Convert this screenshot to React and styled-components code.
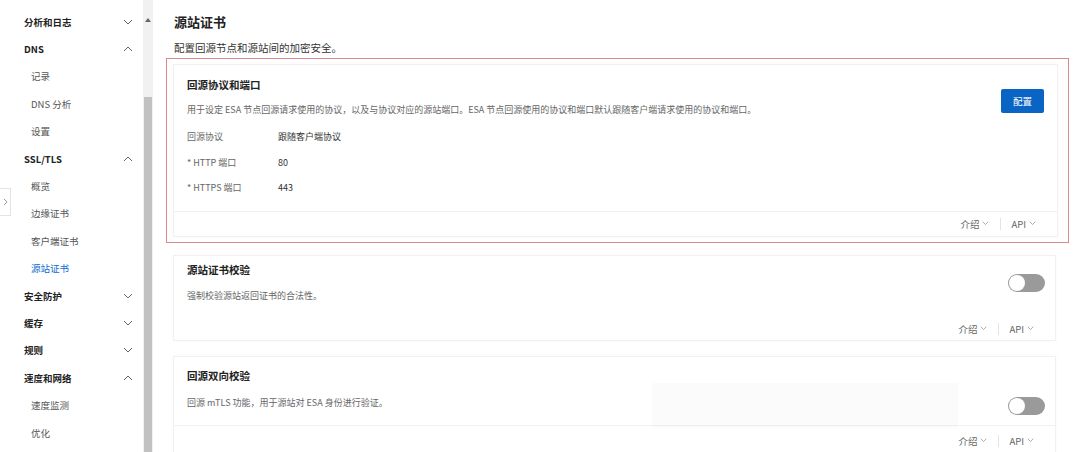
import React from "react";
import styled, { createGlobalStyle } from "styled-components";

const Global = createGlobalStyle`
  html, body {
    margin: 0;
    padding: 0;
    background: #fff;
    font-family: "Noto Sans CJK SC", "Noto Sans", "Liberation Sans", sans-serif;
    color: #333;
  }
`;

const Page = styled.div`
  position: relative;
  width: 1080px;
  height: 452px;
  overflow: hidden;
  display: flex;
`;

const Sidebar = styled.nav`
  width: 143px;
  padding-top: 8px;
  box-sizing: border-box;
  display: flex;
  flex-direction: column;
`;

const NavRow = styled.div`
  height: 27.4px;
  display: flex;
  align-items: center;
  justify-content: space-between;
  padding: 0 10px 0 ${(p) => (p.$group ? 24 : 31)}px;
  font-size: 9.5px;
  font-weight: ${(p) => (p.$group ? 700 : 400)};
  color: ${(p) => (p.$active ? "#0a6ccf" : p.$group ? "#222" : "#555")};
`;

const Scrollbar = styled.div`
  width: 10px;
  background: #f1f1f1;
  display: flex;
  flex-direction: column;
  align-items: center;
`;

const ScrollArrow = styled.div`
  margin-top: 18px;
  width: 0;
  height: 0;
  border-left: 3px solid transparent;
  border-right: 3px solid transparent;
  border-bottom: 4px solid #666;
`;

const ScrollThumb = styled.div`
  margin-top: 75px;
  width: 8px;
  flex: 1;
  background: #c1c1c1;
`;

const Handle = styled.div`
  position: absolute;
  left: 0;
  top: 188px;
  width: 10px;
  height: 26px;
  background: #fff;
  border: 1px solid #e3e3e3;
  border-left: none;
  display: flex;
  align-items: center;
  justify-content: center;
`;

const Main = styled.main`
  flex: 1;
  padding: 12px 11px 0 13px;
  display: flex;
  flex-direction: column;
`;

const Title = styled.h1`
  margin: 0;
  padding-left: 8px;
  font-size: 13px;
  line-height: 20px;
  font-weight: 700;
  color: #222;
`;

const Subtitle = styled.p`
  margin: 6px 0 0;
  padding-left: 8px;
  font-size: 10.5px;
  line-height: 20px;
  color: #333;
`;

const Highlight = styled.div`
  border: 1.5px solid #d98890;
  padding: 5px 10px 5px 6px;
`;

const Card = styled.section`
  background: #fff;
  border: 1px solid #f1f1f1;
  box-shadow: 0 0 3px rgba(0, 0, 0, 0.03);
  padding-top: ${(p) => p.$top}px;
  margin: ${(p) => (p.$outer ? `${p.$gap}px 13px 0 7px` : "0")};
  display: flex;
  flex-direction: column;
`;

const CardHead = styled.div`
  display: flex;
  justify-content: space-between;
  align-items: flex-start;
  padding: 0 ${(p) => p.$right}px 0 13px;
`;

const CardTitle = styled.h2`
  margin: 0;
  font-size: 10.5px;
  line-height: 18px;
  font-weight: 700;
  color: #222;
`;

const CardDesc = styled.p`
  margin: ${(p) => p.$gap}px 0 0;
  font-size: 9px;
  line-height: 16px;
  color: #666;
`;

const Button = styled.button`
  margin-top: ${(p) => p.$offset}px;
  width: 43px;
  height: 24px;
  border: none;
  border-radius: 2px;
  background: #0a64c4;
  color: #fff;
  font-family: inherit;
  font-size: 9.5px;
  padding: 0;
`;

const Toggle = styled.div`
  margin-top: ${(p) => p.$offset}px;
  width: 37px;
  height: 18px;
  border-radius: 9px;
  background: #9a9a9a;
  position: relative;
  box-sizing: border-box;
  &::after {
    content: "";
    position: absolute;
    left: 1px;
    top: 1px;
    width: 16px;
    height: 16px;
    border-radius: 50%;
    background: #fff;
  }
`;

const Fields = styled.div`
  margin-top: 6px;
  padding-left: 13px;
  display: flex;
  flex-direction: column;
`;

const Field = styled.div`
  height: 25.5px;
  display: flex;
  align-items: center;
  font-size: 9px;
`;

const FieldLabel = styled.span`
  width: 91px;
  color: #666;
`;

const FieldValue = styled.span`
  color: #333;
`;

const Footer = styled.div`
  margin-top: ${(p) => p.$gap}px;
  height: ${(p) => p.$h}px;
  border-top: 1px solid ${(p) => (p.$line ? "#f1f1f1" : "transparent")};
  display: flex;
  align-items: center;
  justify-content: flex-end;
  padding-right: 21px;
  font-size: 9.5px;
  color: #666;
`;

const FooterLink = styled.span`
  display: flex;
  align-items: center;
  gap: 3px;
`;

const Divider = styled.span`
  width: 1px;
  height: 12px;
  background: #e4e4e4;
  margin: 0 10px 0 11px;
`;

const Ghost = styled.div`
  position: absolute;
  left: 652px;
  top: 383px;
  width: 306px;
  height: 45px;
  background: rgba(0, 0, 0, 0.014);
`;

const Chevron = ({ up, size = 10, color = "#666" }) => (
  <svg width={size} height={size * 0.6} viewBox="0 0 10 6" fill="none">
    <polyline
      points={up ? "1,5 5,1 9,5" : "1,1 5,5 9,1"}
      stroke={color}
      strokeWidth="1"
    />
  </svg>
);

const nav = [
  { label: "分析和日志", group: true, up: false },
  { label: "DNS", group: true, up: true },
  { label: "记录" },
  { label: "DNS 分析" },
  { label: "设置" },
  { label: "SSL/TLS", group: true, up: true },
  { label: "概览" },
  { label: "边缘证书" },
  { label: "客户端证书" },
  { label: "源站证书", active: true },
  { label: "安全防护", group: true, up: false },
  { label: "缓存", group: true, up: false },
  { label: "规则", group: true, up: false },
  { label: "速度和网络", group: true, up: true },
  { label: "速度监测" },
  { label: "优化" },
];

const CardFooter = ({ gap, h, line = true }) => (
  <Footer $gap={gap} $h={h} $line={line}>
    <FooterLink>
      介绍 <Chevron size={7} color="#888" />
    </FooterLink>
    <Divider />
    <FooterLink>
      API <Chevron size={7} color="#888" />
    </FooterLink>
  </Footer>
);

export default function App() {
  return (
    <Page>
      <Global />
      <Sidebar>
        {nav.map((n) => (
          <NavRow key={n.label} $group={n.group} $active={n.active}>
            <span>{n.label}</span>
            {n.group && <Chevron up={n.up} />}
          </NavRow>
        ))}
      </Sidebar>
      <Scrollbar>
        <ScrollArrow />
        <ScrollThumb />
      </Scrollbar>
      <Handle>
        <svg width="5" height="8" viewBox="0 0 5 8" fill="none">
          <polyline points="1,1 4,4 1,7" stroke="#999" strokeWidth="1" />
        </svg>
      </Handle>
      <Main>
        <Title>源站证书</Title>
        <Subtitle>配置回源节点和源站间的加密安全。</Subtitle>
        <Highlight>
          <Card $top={11}>
            <CardHead $right={13}>
              <div>
                <CardTitle>回源协议和端口</CardTitle>
                <CardDesc $gap={8}>
                  用于设定 ESA 节点回源请求使用的协议，以及与协议对应的源站端口。ESA 节点回源使用的协议和端口默认跟随客户端请求使用的协议和端口。
                </CardDesc>
              </div>
              <Button $offset={13}>配置</Button>
            </CardHead>
            <Fields>
              <Field>
                <FieldLabel>回源协议</FieldLabel>
                <FieldValue>跟随客户端协议</FieldValue>
              </Field>
              <Field>
                <FieldLabel>* HTTP 端口</FieldLabel>
                <FieldValue>80</FieldValue>
              </Field>
              <Field>
                <FieldLabel>* HTTPS 端口</FieldLabel>
                <FieldValue>443</FieldValue>
              </Field>
            </Fields>
            <CardFooter gap={10} h={24} />
          </Card>
        </Highlight>
        <Card $outer $gap={12} $top={5}>
          <CardHead $right={10}>
            <div>
              <CardTitle>源站证书校验</CardTitle>
              <CardDesc $gap={9}>强制校验源站返回证书的合法性。</CardDesc>
            </div>
            <Toggle $offset={13} />
          </CardHead>
          <CardFooter gap={13} h={22} line={false} />
        </Card>
        <Card $outer $gap={15} $top={10}>
          <CardHead $right={10}>
            <div>
              <CardTitle>回源双向校验</CardTitle>
              <CardDesc $gap={10}>回源 mTLS 功能，用于源站对 ESA 身份进行验证。</CardDesc>
            </div>
            <Toggle $offset={30} />
          </CardHead>
          <CardFooter gap={10} h={30} />
        </Card>
      </Main>
      <Ghost />
    </Page>
  );
}
